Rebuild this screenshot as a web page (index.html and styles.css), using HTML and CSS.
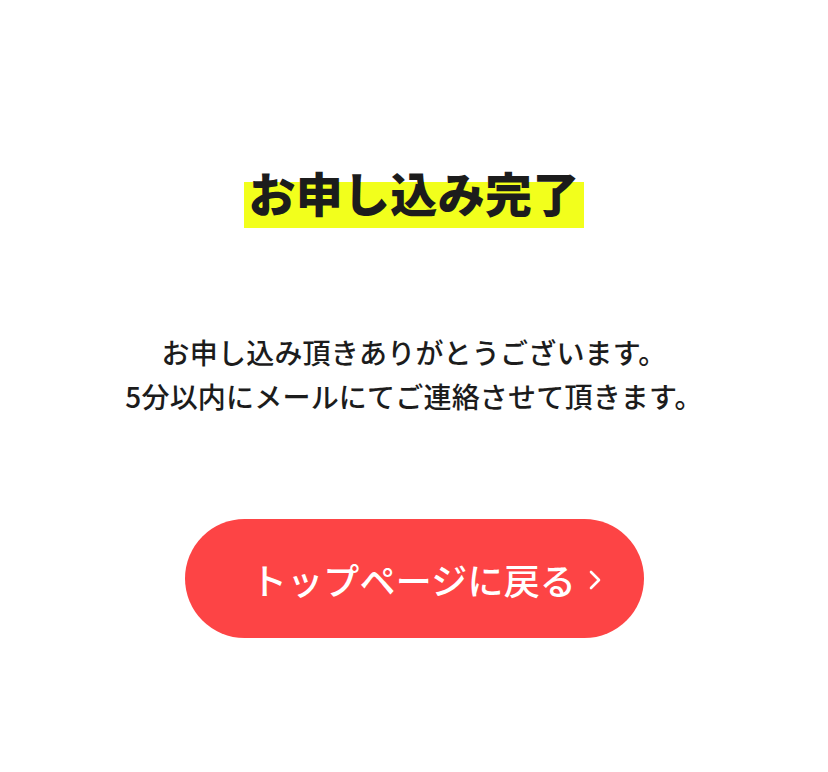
FILE: index.html
```html
<!DOCTYPE html>
<html lang="ja">
<head>
<meta charset="utf-8">
<link rel="stylesheet" href="styles.css">
</head>
<body>
<main class="page">
  <h1 class="title"><span class="marker">お申し込み完了</span></h1>
  <p class="message">お申し込み頂きありがとうございます。<br>5分以内にメールにてご連絡させて頂きます。</p>
  <a class="btn" href="#">
    <span class="btn-label">トップページに戻る</span>
    <svg class="chev" width="12" height="22" viewBox="0 0 12 22"><path d="M2 3 L10 11 L2 19" fill="none" stroke="#fff" stroke-width="2.6" stroke-linecap="round" stroke-linejoin="round"/></svg>
  </a>
</main>
</body>
</html>
```
FILE: styles.css
```css
html, body {
  margin: 0;
  padding: 0;
  background: #ffffff;
}
body {
  font-family: "Noto Sans CJK JP", "Noto Sans", sans-serif;
  color: #1c1c1c;
}
.page {
  display: flex;
  flex-direction: column;
  align-items: center;
  padding-top: 167px;
}
.title {
  margin: 0;
  font-size: 47px;
  font-weight: 900;
  line-height: 50px;
}
.marker {
  display: inline-block;
  padding: 0 4px 11px;
  letter-spacing: 0.3px;
  background: linear-gradient(transparent 24%, #f2ff1c 24%);
}
.message {
  margin: 102px 0 0;
  font-size: 28px;
  font-weight: 500;
  line-height: 44px;
  letter-spacing: 0.2px;
  text-align: center;
}
.btn {
  margin-top: 101px;
  width: 459px;
  height: 119px;
  border-radius: 60px;
  background: #fd4445;
  color: #fff;
  text-decoration: none;
  display: flex;
  align-items: center;
  justify-content: center;
  gap: 13px;
  padding-left: 24px;
  box-sizing: border-box;
}
.btn-label {
  font-size: 36px;
  font-weight: 500;
  letter-spacing: 0.2px;
}
.chev {
  display: block;
  margin-top: 2px;
}
```
